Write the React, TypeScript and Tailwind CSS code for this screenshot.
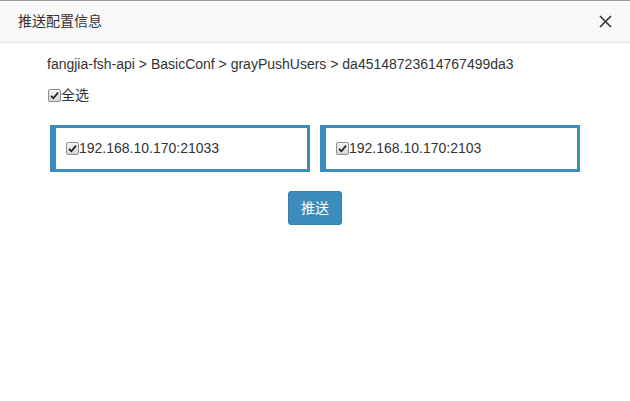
import React from 'react';

const Check = () => (
  <span className="inline-flex w-[13px] h-[13px] shrink-0 items-center justify-center rounded-[2px] border border-[#8f8f8f] bg-gradient-to-b from-[#f4f4f4] to-[#d6d6d6]">
    <svg width="9" height="9" viewBox="0 0 9 9">
      <path d="M1 4.8 L3.4 7.2 L8 1.6" fill="none" stroke="#222" strokeWidth="1.7" />
    </svg>
  </span>
);

const servers = ['192.168.10.170:21033', '192.168.10.170:2103'];

export default function App() {
  return (
    <div className="w-[630px] h-[401px] bg-white border-t border-[#9a9a9a] text-[14px] text-[#333]" style={{ fontFamily: '"Liberation Sans", Arial, "Noto Sans CJK SC", sans-serif' }}>
      <div className="h-[42px] bg-[#f8f8f8] border-b border-[#e5e5e5] flex items-center justify-between pl-[18px] pr-[18px]">
        <span className="text-[14px] text-[#333]">推送配置信息</span>
        <svg width="13" height="13" viewBox="0 0 13 13">
          <path d="M1 1 L12 12 M12 1 L1 12" stroke="#333" strokeWidth="1.6" />
        </svg>
      </div>
      <div className="pl-[47px] pt-[11px] leading-[20px]">
        fangjia-fsh-api &gt; BasicConf &gt; grayPushUsers &gt; da45148723614767499da3
      </div>
      <div className="pl-[48px] mt-[11px] flex items-center leading-[20px]">
        <Check />
        <span>全选</span>
      </div>
      <div className="mx-[50px] mt-[20px] grid grid-cols-2 gap-[10px]">
        {servers.map((s) => (
          <div key={s} className="h-[47px] border-[3px] border-l-[6px] border-[#3a8dbf] flex items-center pl-[10px]">
            <Check />
            <span>{s}</span>
          </div>
        ))}
      </div>
      <div className="flex justify-center mt-[19px]">
        <button className="w-[54px] h-[34px] rounded-[3px] bg-[#3c8dbc] border border-[#367fa9] text-white text-[14px]">
          推送
        </button>
      </div>
    </div>
  );
}
